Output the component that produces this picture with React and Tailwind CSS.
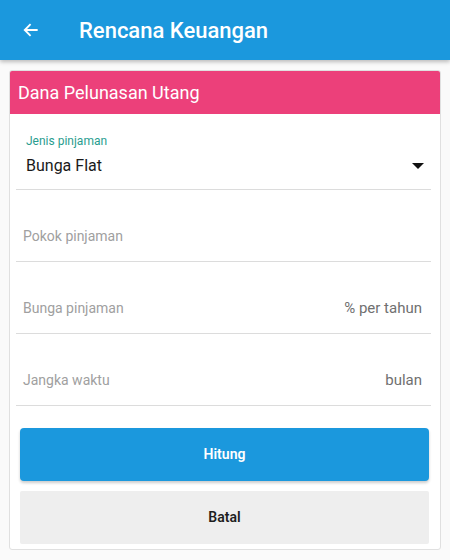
import React from "react";

const InputRow = ({ label, suffix }) => (
  <div className="flex h-[72px] items-end justify-between border-b border-[#dcdcdc] pb-[15px] pl-[7px] pr-[9px]">
    <span className="text-[14px] leading-[20px] text-[#a0a0a0]">{label}</span>
    {suffix && <span className="text-[15px] leading-[20px] text-[#707070]">{suffix}</span>}
  </div>
);

const App = () => {
  return (
    <div
      className="h-[560px] w-[450px] overflow-hidden bg-[#fafafa]"
      style={{ fontFamily: "Roboto, 'Noto Sans', sans-serif" }}
    >
      <header className="relative z-10 flex h-[60px] items-center bg-[#1b98dd] shadow-[0_2px_4px_rgba(0,0,0,0.25)]">
        <svg width="20" height="20" viewBox="0 0 24 24" className="ml-[21px]" fill="none">
          <path d="M20 12H4.5M11.5 5l-7 7 7 7" stroke="#fff" strokeWidth="2.2" />
        </svg>
        <h1 className="ml-[38px] text-[22px] font-medium text-white">Rencana Keuangan</h1>
      </header>

      <div className="mx-[9px] mt-[10px] rounded-[3px] border border-[#e0e0e0] bg-white pb-[5px]">
        <div className="flex h-[43px] items-center rounded-t-[2px] bg-[#ec407a] pl-[8px]">
          <span className="text-[18px] text-white">Dana Pelunasan Utang</span>
        </div>

        <div className="pl-[6px] pr-[9px]">
          <div className="h-[76px] border-b border-[#dcdcdc] pl-[10px] pr-[7px] pt-[20px]">
            <div className="text-[12px] leading-[14px] text-[#2a9d8f]">Jenis pinjaman</div>
            <div className="flex h-[36px] items-center justify-between">
              <span className="text-[16px] text-[#1a1a1a]">Bunga Flat</span>
              <svg width="12" height="6" viewBox="0 0 12 6">
                <path d="M0 0h12L6 6z" fill="#111" />
              </svg>
            </div>
          </div>

          <InputRow label="Pokok pinjaman" />
          <InputRow label="Bunga pinjaman" suffix="% per tahun" />
          <InputRow label="Jangka waktu" suffix="bulan" />

          <div className="ml-[4px] mr-[2px] mt-[22px] flex flex-col gap-[10px]">
            <button className="h-[53px] rounded-[4px] bg-[#1b98dd] text-[14px] font-semibold text-white shadow-[0_2px_3px_rgba(0,0,0,0.2)]">
              Hitung
            </button>
            <button className="h-[53px] rounded-[2px] bg-[#eeeeee] text-[14px] font-semibold text-[#1e1e1e]">
              Batal
            </button>
          </div>
        </div>
      </div>
    </div>
  );
};

export default App;
